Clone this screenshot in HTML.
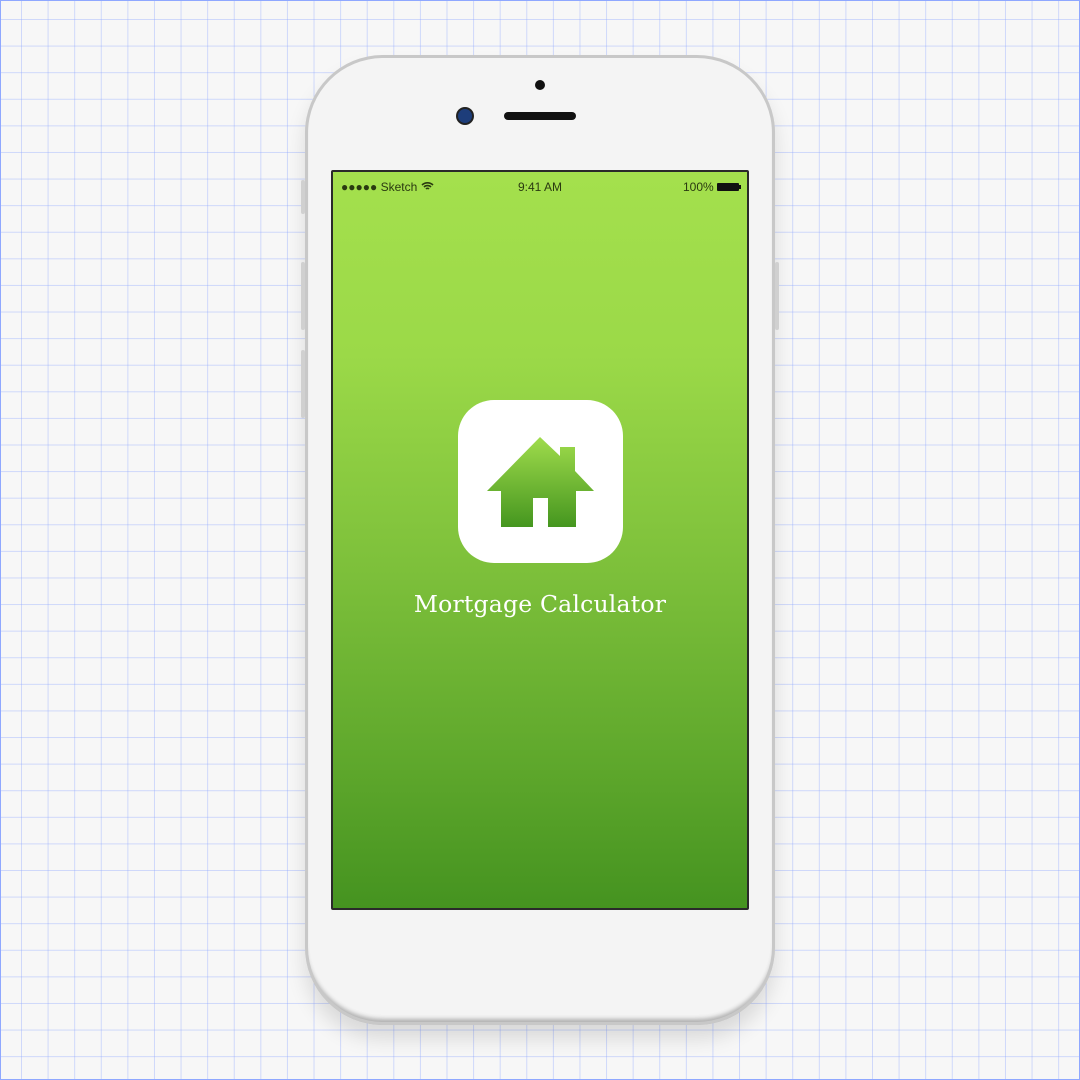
<!DOCTYPE html>
<html><head><meta charset="utf-8"><style>
html,body{margin:0;padding:0}
body{width:1080px;height:1080px;position:relative;overflow:hidden;background-color:#f7f7f7;
background-image:linear-gradient(to right,rgba(140,165,255,.38) 1px,transparent 1px),linear-gradient(to bottom,rgba(140,165,255,.38) 1px,transparent 1px);
background-size:26.6px 26.6px;background-position:21px 19px;font-family:"Liberation Sans",sans-serif}
.frame{position:absolute;left:0;top:0;width:1078px;height:1078px;border:1px solid #8fa8ff}
.phone{position:absolute;left:305px;top:55px;width:470px;height:970px;border-radius:78px;background:#f4f4f4;
box-shadow:inset 0 0 0 3px #c8c8c8,inset 0 -6px 4px #b0b0b0,0 14px 20px rgba(0,0,0,.12)}
.btn{position:absolute;background:#d0d0d0;width:4px;border-radius:2px}
.screen{position:absolute;left:331px;top:170px;width:414px;height:736px;border:2px solid #2a2a2a;border-radius:2px;
background:linear-gradient(to bottom,#a4e04d 0%,#9bd948 25%,#7cbf3a 55%,#5fa82c 80%,#459320 100%)}
.sb{position:absolute;top:8px;font-size:12px;color:#2a3a10}
.icon{position:absolute;left:458px;top:400px;width:165px;height:163px;background:#fff;border-radius:36px}
.title{position:absolute;left:0;width:1080px;top:590px;text-align:center;color:#fff;font-family:"DejaVu Serif","Liberation Serif",serif;font-size:23.5px;letter-spacing:0.2px}
</style></head><body>
<div class="frame"></div>
<div class="phone"></div>
<div class="btn" style="left:301px;top:180px;height:34px"></div>
<div class="btn" style="left:301px;top:262px;height:68px"></div>
<div class="btn" style="left:301px;top:350px;height:68px"></div>
<div class="btn" style="left:775px;top:262px;height:68px"></div>
<div style="position:absolute;left:535px;top:80px;width:10px;height:10px;border-radius:50%;background:#111"></div>
<div style="position:absolute;left:458px;top:109px;width:14px;height:14px;border-radius:50%;background:#1d3d7a;box-shadow:0 0 0 2px #222"></div>
<div style="position:absolute;left:504px;top:112px;width:72px;height:8px;border-radius:4px;background:#111"></div>
<div class="screen">
 <div class="sb" style="left:8px">●●●●● Sketch
  <svg width="13" height="10" viewBox="0 0 13 10" style="vertical-align:0"><path d="M1 4a8 8 0 0 1 11 0M3 6a5 5 0 0 1 7 0M5 8a2 2 0 0 1 3 0" stroke="#2a3a10" stroke-width="1.6" fill="none"/></svg></div>
 <div class="sb" style="left:0;width:414px;text-align:center">9:41 AM</div>
 <div class="sb" style="right:6px">100% <span style="display:inline-block;width:22px;height:8px;background:#111;border-radius:1px;vertical-align:0"></span><span style="display:inline-block;width:2px;height:4px;background:#111;vertical-align:2px"></span></div>
</div>
<div class="icon"></div>
<svg style="position:absolute;left:458px;top:400px" width="165" height="163" viewBox="458 400 165 163">
<defs><linearGradient id="g" x1="0" y1="0" x2="0" y2="1"><stop offset="0" stop-color="#a0dc4c"/><stop offset="1" stop-color="#45961f"/></linearGradient></defs>
<path d="M540 437 L560 456 L560 447 L575 447 L575 471 L594 491 L576 491 L576 527 L548 527 L548 498 L533 498 L533 527 L501 527 L501 491 L487 491 Z" fill="url(#g)"/>
</svg>
<div class="title">Mortgage Calculator</div>
</body></html>
